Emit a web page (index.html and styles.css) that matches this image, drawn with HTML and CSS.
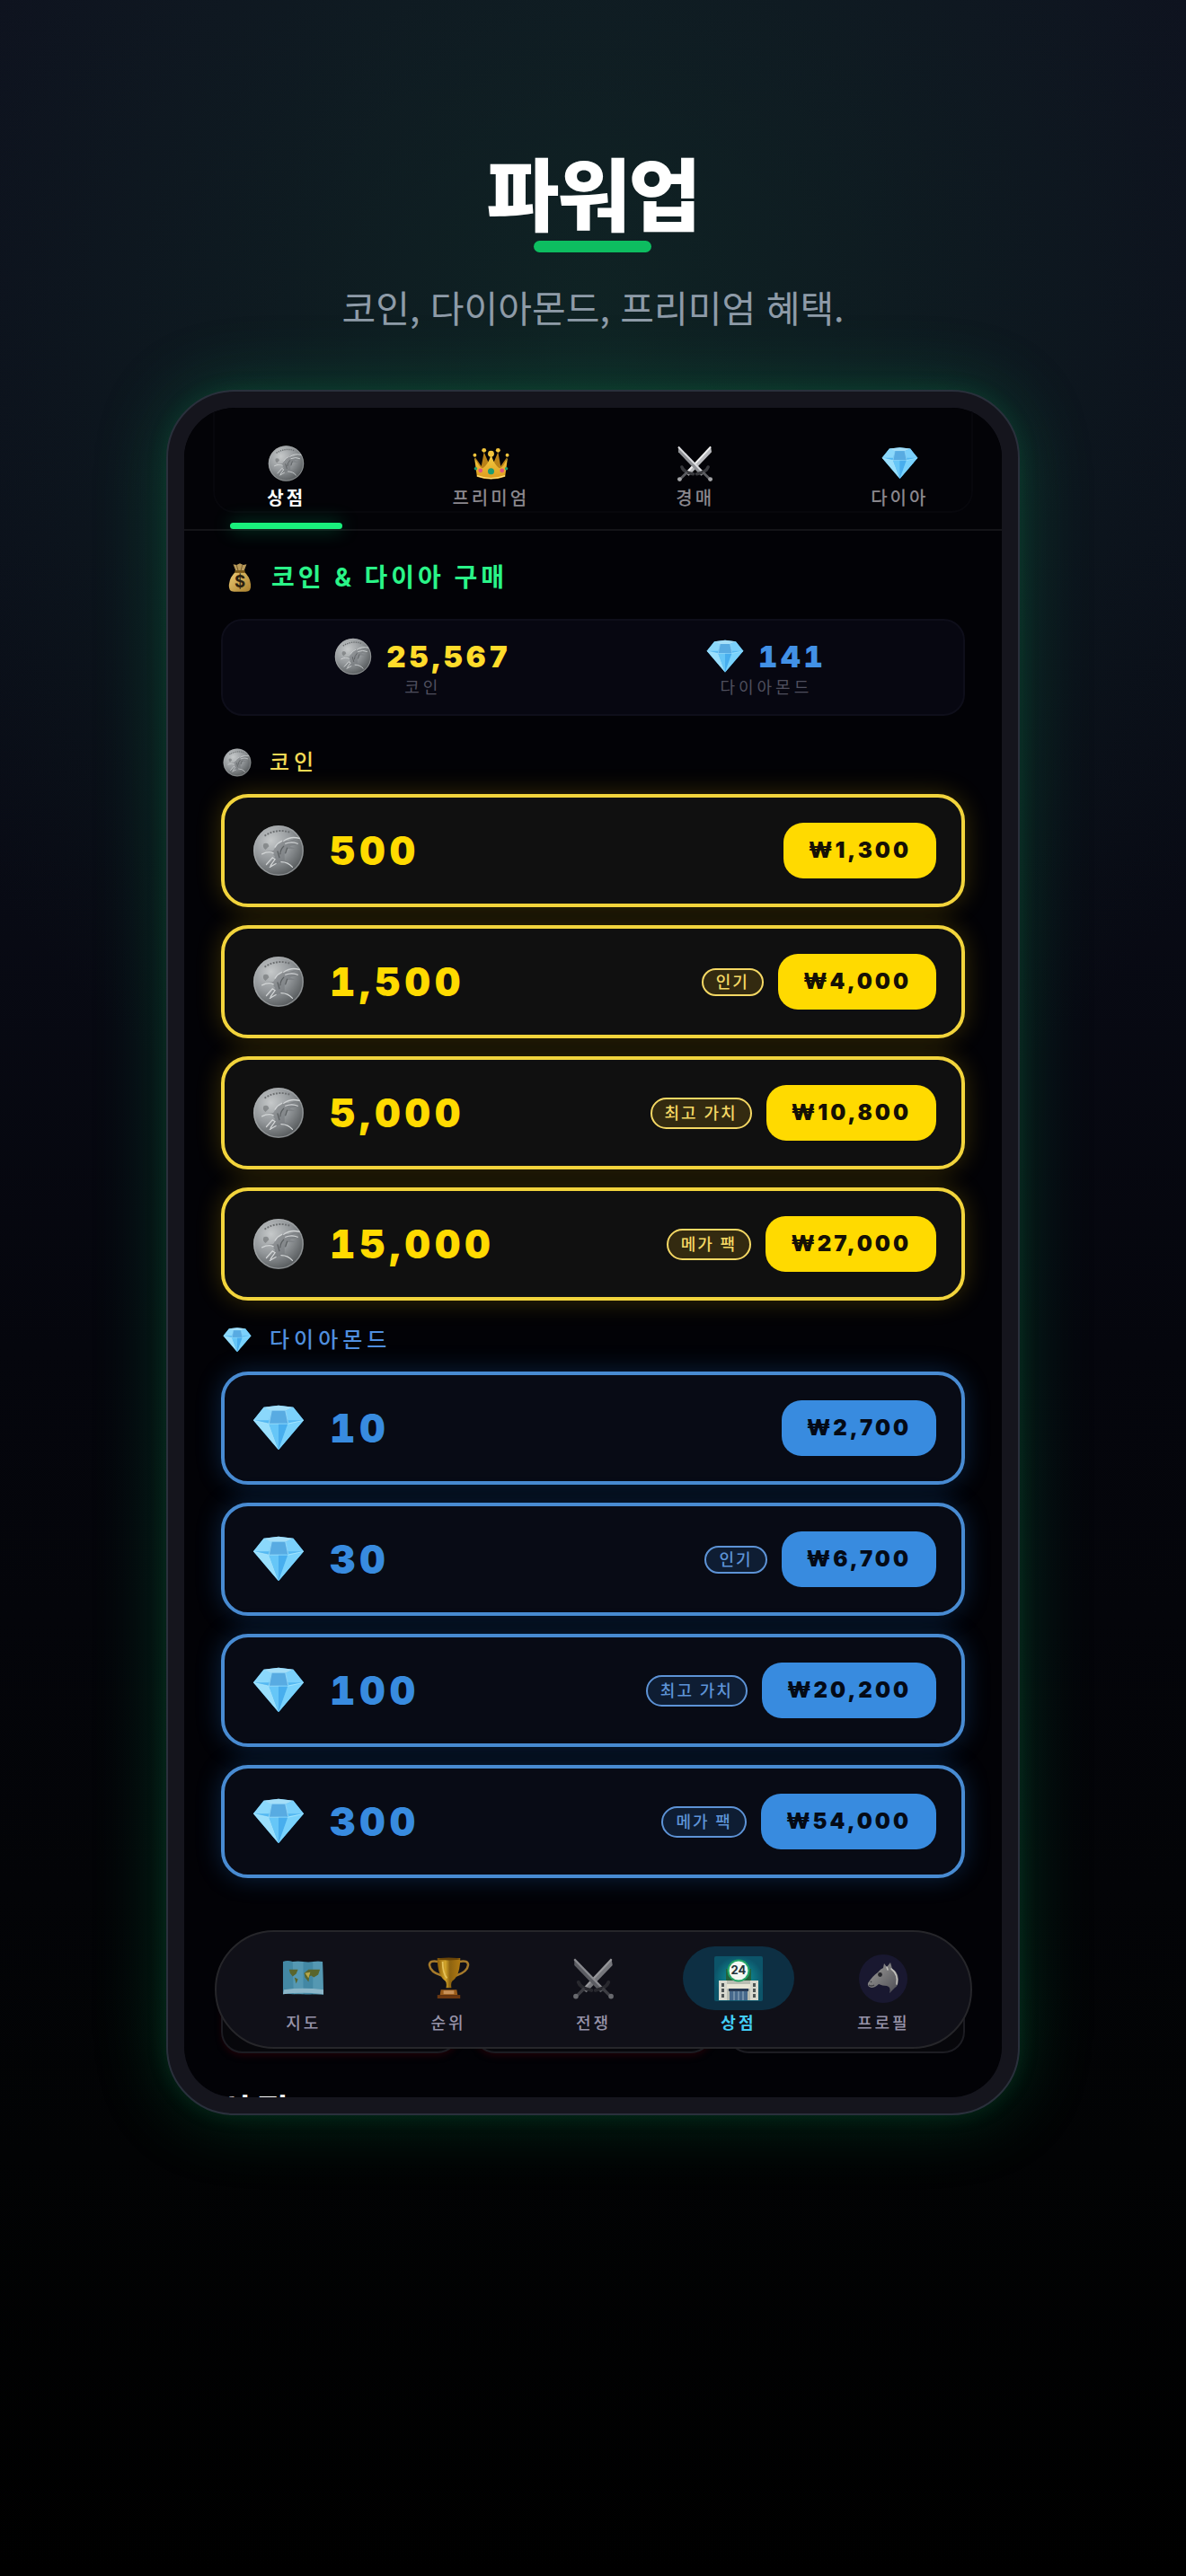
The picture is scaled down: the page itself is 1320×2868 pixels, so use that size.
FILE: index.html
```html
<!DOCTYPE html>
<html lang="ko">
<head>
<meta charset="utf-8">
<meta name="viewport" content="width=device-width, initial-scale=1">
<title>파워업</title>
<link rel="stylesheet" href="styles.css">
</head>
<body>
<svg class="sprite" aria-hidden="true">
  <defs>
    <radialGradient id="g-coin" cx=".35" cy=".3" r=".8"><stop offset="0" stop-color="#c6c9ca"/><stop offset=".5" stop-color="#93979a"/><stop offset="1" stop-color="#4b4f51"/></radialGradient>
    <linearGradient id="g-gold" x1="0" y1="0" x2="0" y2="1"><stop offset="0" stop-color="#f7cf45"/><stop offset="1" stop-color="#dd9a1c"/></linearGradient>
    <linearGradient id="g-cup" x1="0" y1="0" x2="1" y2="0"><stop offset="0" stop-color="#8a5b05"/><stop offset=".35" stop-color="#d3a52b"/><stop offset=".55" stop-color="#8d6310"/><stop offset="1" stop-color="#b07a12"/></linearGradient>
    <linearGradient id="g-bag" x1="0" y1="0" x2="1" y2="1"><stop offset="0" stop-color="#efcd77"/><stop offset="1" stop-color="#a87f2c"/></linearGradient>
    <linearGradient id="g-horse" x1="0" y1="0" x2="1" y2="1"><stop offset="0" stop-color="#a09f9c"/><stop offset="1" stop-color="#4b4b52"/></linearGradient>
    <radialGradient id="g-shop"><stop offset="0" stop-color="#12a7a9"/><stop offset="1" stop-color="#0c5469"/></radialGradient>
  </defs>
  <symbol id="i-coin" viewBox="0 0 60 60">
    <circle cx="30" cy="30" r="29" fill="url(#g-coin)"/>
    <circle cx="30" cy="30" r="28" fill="none" stroke="#aeb1b2" stroke-width="1.400" opacity=".6"/>
    <path d="M14 13q14-9 29-4" fill="none" stroke="#6d7072" stroke-width="2" stroke-dasharray="2 1.500"/>
    <path d="M13 22q5-2 6 3l-4 4q-4-3-2-7z" fill="#6b6e70" opacity=".6"/>
    <path d="M27 25q4-6 9-7l5 1 11-3-8 5 9 1-10 3 6 3-9 0-3 6 0 7 5 4-6-1-6 0-7 4-8 1 6-5 5-7-3-4-7-2 8-1z" fill="#73777a" opacity=".55"/>
    <path d="M36 19q8-6 18-3M38 22q7-3 14 0M11 34q8-4 13-1M16 46l7-8 3 2-5 7M20 49l7-4M33 43q8 0 13 6M26 26q3-5 8-7" fill="none" stroke="#d2d5d6" stroke-width="1.300" stroke-linecap="round"/>
    <path d="M36 25q-4 4-4 9M40 27l-2 6M29 31l2 7" fill="none" stroke="#5a5e60" stroke-width="1.300" stroke-linecap="round"/>
  </symbol>
  <symbol id="i-gem" viewBox="0 0 60 52">
    <path d="M13 2l17-2 17 2 12 15-29 34L1 17z" fill="#55b9f2"/>
    <path d="M13 2L1 17h18l3-12z" fill="#8bd8fb"/><path d="M13 2l17-2 17 2-9 4H22z" fill="#a4def8"/>
    <path d="M47 2l12 15H41L38 6z" fill="#7bd0fb"/><path d="M22 6h16l3 14-22 1z" fill="#58abe2"/>
    <path d="M1 17l18 4 11 30z" fill="#9adffc"/><path d="M19 21l11 30V21z" fill="#66c6f7"/>
    <path d="M30 21l11-1-11 31z" fill="#48aeee"/><path d="M59 17l-18 3-11 31z" fill="#79d2fc"/>
    <path d="M1 17l18 4h22l18-4M22 6l-3 15M38 6l3 14" fill="none" stroke="#bdefff" stroke-width="1" opacity=".6"/>
  </symbol>
  <symbol id="i-crown" viewBox="0 0 42 36">
    <path d="M3 11l7 10 3-16 5 12h6l5-12 3 16 7-10-3 21q-15 6-30 0z" fill="#b98118"/>
    <path d="M2 11q7 14 10 12 6-4 9-15 4 12 9 15 4 2 10-12l-3 22q-16 6-32 0z" fill="url(#g-gold)"/>
    <g fill="#f3c53d"><circle cx="2.500" cy="8.500" r="2"/><circle cx="13" cy="3" r="2.500"/><circle cx="21" cy="7" r="3.500"/><circle cx="29" cy="3" r="2.500"/><circle cx="39.500" cy="8.500" r="2"/></g>
    <circle cx="21" cy="27" r="3.600" fill="#1e9c72"/><circle cx="9" cy="26" r="2.400" fill="#e1557d"/><circle cx="33.500" cy="26" r="2.400" fill="#e1557d"/><circle cx="3.500" cy="24" r="1.800" fill="#1e9c72"/><circle cx="38.500" cy="24" r="1.800" fill="#1e9c72"/>
    <path d="M5 32q16 6 32 0" fill="none" stroke="#ffe27a" stroke-width="1.300"/>
  </symbol>
  <symbol id="i-swords" viewBox="0 0 42 42">
    <path d="M10 32L39 2l1 6-26 27z" fill="#b9babd"/><path d="M11 32L39 2" stroke="#f2f2f2" stroke-width="2"/>
    <path d="M32 32L2 2l0 6 26 27z" fill="#8f9195"/><path d="M31 32L2 2" stroke="#dcdde0" stroke-width="2"/>
    <path d="M6 25q2 6 13 8M36 25q-2 6-13 8" fill="none" stroke="#38393d" stroke-width="3.500" stroke-linecap="round"/>
    <path d="M12 31l-8 8M30 31l8 8" stroke="#5b5c60" stroke-width="3"/>
    <circle cx="3.500" cy="39" r="2.500" fill="#a3a4a7"/><circle cx="38.500" cy="39" r="2.500" fill="#a3a4a7"/>
  </symbol>
  <symbol id="i-map" viewBox="0 0 48 42">
    <path d="M1 2q5-2 11 0 6-1 12 0 6 1 11 0 6-1 11 0l1 37q-6-1-12 0-6 1-11 0-6-1-12 0-6-1-11 0z" fill="#4388a4"/>
    <path d="M12 2l1 37 11 0V2zM35 2v37l12 1L46 2z" fill="#5c9fb8" opacity=".7"/>
    <path d="M2 34q22-3 45 0v5q-23-3-46 0z" fill="#8cb6c8"/>
    <path d="M8 11h10l-2 5-4 3-3-4zM14 20l4 2-2 5zM25 15l5-4 13 0-2 6-5 3-3-2-2 1-1 6-4-5z" fill="#59652c"/>
    <path d="M26 15l6-1-2 7z" fill="#b7a74a"/>
  </symbol>
  <symbol id="i-trophy" viewBox="0 0 48 48">
    <path d="M12 5Q2 3 2 9q1 8 14 12M36 5q10-2 10 4-1 8-14 12" fill="none" stroke="#a67a2b" stroke-width="2.600"/>
    <path d="M11 1h26q0 20-9 26-2 2-1 8h-6q1-6-1-8-9-6-9-26z" fill="url(#g-cup)"/><ellipse cx="24" cy="2" rx="13" ry="1.500" fill="#6a4507"/>
    <path d="M15 37h18l1 6H14z" fill="#9a5b1a"/><path d="M18 38h12v4H18z" fill="#c99158"/><path d="M11 43h26v4H11z" fill="#6b3710"/>
    <path d="M17 5q0 13 5 19" fill="none" stroke="#e5c25a" stroke-width="1.800"/>
  </symbol>
  <symbol id="i-horse" viewBox="0 0 54 54">
    <circle cx="27" cy="27" r="27" fill="#191830"/>
    <path d="M27 15l1-5 3 4 4-5 2 7q6 3 7 11 0 8-4 10l-6 6q2-7-3-8-5 0-9-2-4 4-8 4-5-1-4-5 5-8 11-12 3-4 6-5z" fill="url(#g-horse)"/>
    <path d="M36 16q8 6 6 17M31 14l1 3" fill="none" stroke="#c0bfbb" stroke-width="1.600" stroke-linecap="round"/>
    <circle cx="23.500" cy="22.500" r="2.400" fill="#25252b"/><path d="M11 34q3 2 6 0M13 30l1 1" fill="none" stroke="#3c3c42" stroke-width="1.400"/>
  </symbol>
</svg>

<main class="page">
  <header class="hero">
    <h1 class="hero-title">파워업</h1>
    <p class="hero-sub">코인, 다이아몬드, 프리미엄 혜택.</p>
  </header>

  <section class="phone">
    <div class="screen">
      <nav class="tabs">
        <a class="tab is-active" href="#shop"><svg class="tab-icon"><use href="#i-coin"/></svg><span>상점</span></a>
        <a class="tab" href="#premium"><svg class="tab-icon"><use href="#i-crown"/></svg><span>프리미엄</span></a>
        <a class="tab" href="#auction"><svg class="tab-icon"><use href="#i-swords"/></svg><span>경매</span></a>
        <a class="tab" href="#dia"><svg class="tab-icon"><use href="#i-gem"/></svg><span>다이아</span></a>
      </nav>

      <div class="content">
        <h2 class="section-title">
          <svg class="bag-icon" viewBox="0 0 28 36">
            <path d="M6 2l4 1 4-2 4 2 4-1-3 8H9z" fill="#b89a5a"/><path d="M10 3l2 7M17 3l-2 7" stroke="#705625" stroke-width="1"/>
            <path d="M9 11h10q7 6 8 15 1 9-6 9H7q-7 0-6-9 1-9 8-15z" fill="url(#g-bag)"/>
            <path d="M8 11h12" stroke="#7a5818" stroke-width="3"/>
            <text x="14" y="30" text-anchor="middle" class="bag-sign">$</text>
          </svg>
          <span>코인 &amp; 다이아 구매</span>
        </h2>

        <div class="balance">
          <div class="wallet"><div class="wallet-row"><svg class="wallet-icon"><use href="#i-coin"/></svg><span class="wallet-value gold">25,567</span></div><span class="wallet-label">코인</span></div>
          <div class="wallet"><div class="wallet-row"><svg class="wallet-icon"><use href="#i-gem"/></svg><span class="wallet-value blue">141</span></div><span class="wallet-label">다이아몬드</span></div>
        </div>

        <h3 class="group-title gold-soft"><svg class="group-icon"><use href="#i-coin"/></svg><span>코인</span></h3>
        <ul class="packs packs-gold">
          <li class="pack"><svg class="pack-icon"><use href="#i-coin"/></svg><span class="amount">500</span><button class="price">₩1,300</button></li>
          <li class="pack"><svg class="pack-icon"><use href="#i-coin"/></svg><span class="amount">1,500</span><span class="badge">인기</span><button class="price">₩4,000</button></li>
          <li class="pack"><svg class="pack-icon"><use href="#i-coin"/></svg><span class="amount">5,000</span><span class="badge badge-tall">최고 가치</span><button class="price">₩10,800</button></li>
          <li class="pack"><svg class="pack-icon"><use href="#i-coin"/></svg><span class="amount">15,000</span><span class="badge badge-tall">메가 팩</span><button class="price">₩27,000</button></li>
        </ul>

        <h3 class="group-title blue-soft"><svg class="group-icon"><use href="#i-gem"/></svg><span>다이아몬드</span></h3>
        <ul class="packs packs-blue">
          <li class="pack"><svg class="pack-icon"><use href="#i-gem"/></svg><span class="amount">10</span><button class="price">₩2,700</button></li>
          <li class="pack"><svg class="pack-icon"><use href="#i-gem"/></svg><span class="amount">30</span><span class="badge">인기</span><button class="price">₩6,700</button></li>
          <li class="pack"><svg class="pack-icon"><use href="#i-gem"/></svg><span class="amount">100</span><span class="badge badge-tall">최고 가치</span><button class="price">₩20,200</button></li>
          <li class="pack"><svg class="pack-icon"><use href="#i-gem"/></svg><span class="amount">300</span><span class="badge badge-tall">메가 팩</span><button class="price">₩54,000</button></li>
        </ul>

        <div class="tiles"><div class="tile tile-red"></div><div class="tile tile-red"></div><div class="tile"></div></div>
        <div class="peek"><h2 class="peek-title">상점</h2></div>
      </div>

      <nav class="dock">
        <a class="dock-item" href="#map"><span class="dock-pill"><svg class="dock-icon"><use href="#i-map"/></svg></span><span>지도</span></a>
        <a class="dock-item" href="#rank"><span class="dock-pill"><svg class="dock-icon"><use href="#i-trophy"/></svg></span><span>순위</span></a>
        <a class="dock-item" href="#war"><span class="dock-pill"><svg class="dock-icon dim"><use href="#i-swords"/></svg></span><span>전쟁</span></a>
        <a class="dock-item is-active" href="#shop">
          <span class="dock-pill">
            <svg class="dock-icon large" viewBox="0 0 54 50">
              <rect width="54" height="50" rx="2" fill="url(#g-shop)"/>
              <path d="M13 14h28v17H13z" fill="#23623c"/><path d="M5 27h44v22H5z" fill="#b9bdb2"/>
              <path d="M5 27h9v22H5zM40 27h9v22h-9z" fill="#d8d9cf"/><path d="M8 30h3v4H8zM8 36h3v4H8zM8 42h3v4H8zM43 30h3v4h-3zM43 36h3v4h-3zM43 42h3v4h-3z" fill="#4e5555"/>
              <path d="M14 31h26v5H14z" fill="#e7e5d5"/><path d="M16 36h22v3H16z" fill="#283b55"/><path d="M17 39h20v10H17z" fill="#47698c"/><path d="M22 39v10M27 39v10M32 39v10" stroke="#9db4c4" stroke-width="1"/>
              <circle cx="27" cy="16" r="12.500" fill="#23a566"/><circle cx="27" cy="16" r="10.500" fill="#f2f7f2"/>
              <text x="27" y="20" text-anchor="middle" class="shop-sign">24</text>
            </svg>
          </span>
          <span>상점</span>
        </a>
        <a class="dock-item" href="#profile"><span class="dock-pill"><svg class="dock-icon large"><use href="#i-horse"/></svg></span><span>프로필</span></a>
      </nav>
    </div>
  </section>
</main>
</body>
</html>
```
FILE: styles.css
```css
* { box-sizing: border-box; }

body {
  margin: 0;
  min-height: 100vh;
  background:
    radial-gradient(ellipse 860px 1000px at 50% 360px, rgba(20, 70, 50, .36), transparent 100%),
    linear-gradient(#0e101e 0, #0b0e1a 600px, #05060d 1500px, #020304 2400px, #000 100%);
  color: #fff;
  font-family: Inter, "Noto Sans CJK KR", sans-serif;
}

h1, h2, h3, p, ul { margin: 0; padding: 0; }
ul { list-style: none; }
a { color: inherit; text-decoration: none; }
svg { display: block; flex: none; }
.sprite { position: absolute; width: 0; height: 0; }
.bag-sign,
.shop-sign { font-family: Inter, sans-serif; font-weight: 700; letter-spacing: 0; }
.bag-sign { font-size: 20px; fill: #2b2110; }
.shop-sign { font-size: 13px; fill: #23343a; }

.page {
  display: flex;
  flex-direction: column;
  align-items: center;
  padding: 156px 0 200px;
}

.hero {
  display: flex;
  flex-direction: column;
  align-items: center;
  font-family: "Noto Sans CJK KR", sans-serif;
  text-align: center;
}
.hero-title {
  font-size: 88px;
  line-height: 112px;
  font-weight: 900;
  letter-spacing: -2px;
}
.hero-title::after {
  content: "";
  display: block;
  width: 131px;
  height: 13px;
  margin: 0 auto;
  border-radius: 7px;
  background: #0dbd60;
}
.hero-sub {
  margin-top: 30px;
  font-size: 41px;
  line-height: 60px;
  font-weight: 400;
  color: #8e9ba8;
}

.phone {
  width: 72%;
  max-width: 950px;
  margin-top: 63px;
  padding: 18px;
  border: 2px solid #2a303c;
  border-radius: 76px;
  background: #15151d;
  box-shadow: 0 0 20px rgba(10, 100, 60, .25), 0 0 80px rgba(10, 180, 100, .26);
}
.screen {
  position: relative;
  overflow: hidden;
  border-radius: 56px;
  background: #020206;
}

.tabs {
  position: relative;
  display: grid;
  grid-template-columns: repeat(4, 1fr);
  padding-top: 41px;
  border-bottom: 2px solid #141418;
  background: #030307;
}
/* outline of the card that has scrolled under the bar */
.tabs::before {
  content: "";
  position: absolute;
  inset: 0 32px 18px;
  border: 2px solid #07070c;
  border-top: 0;
  border-radius: 0 0 24px 24px;
}
.tab {
  position: relative;
  display: flex;
  flex-direction: column;
  align-items: center;
  gap: 3px;
  font-size: 20px;
  line-height: 30px;
  font-weight: 500;
  letter-spacing: 3px;
  color: #8a878d;
}
.tab-icon { width: 41px; height: 42px; }
.tab::after {
  content: "";
  width: 125px;
  height: 7px;
  margin-top: 9px;
  border-radius: 4px;
}
.tab.is-active { color: #fff; font-weight: 700; }
.tab.is-active::after {
  background: #19f07c;
  box-shadow: 0 0 20px rgba(0, 255, 150, .35);
}

.content { padding: 32px 41px 0; }
.section-title {
  display: flex;
  align-items: center;
  gap: 22px;
  padding-left: 8px;
  font-size: 28px;
  line-height: 40px;
  font-weight: 700;
  letter-spacing: 4px;
  color: #2af588;
}
.bag-icon { width: 26px; height: 34px; }

.balance {
  display: flex;
  justify-content: space-around;
  height: 108px;
  margin-top: 26px;
  padding: 19px 44px 0 16px;
  border: 2px solid #0e0e1a;
  border-radius: 24px;
  background: #070711;
}
.wallet { display: flex; flex-direction: column; align-items: center; }
.wallet-row { display: flex; align-items: center; gap: 16px; }
.wallet-icon { width: 42px; height: 42px; }
.wallet-value {
  font-size: 33px;
  line-height: 42px;
  font-weight: 900;
  font-variant-numeric: tabular-nums;
  letter-spacing: 4px;
}
.wallet-label {
  font-size: 18px;
  line-height: 28px;
  letter-spacing: 4px;
  color: #4f4f5e;
}
.gold { color: #ffdc2b; }
.blue { color: #4291e6; }

.group-title {
  display: flex;
  align-items: center;
  gap: 20px;
  padding-left: 2px;
  font-size: 24px;
  line-height: 32px;
  font-weight: 500;
  letter-spacing: 5px;
}
.group-icon { width: 32px; height: 32px; }
.gold-soft { margin-top: 36px; color: #f5da55; }
.blue-soft { margin-top: 28px; color: #4f8ede; }

.packs { display: flex; flex-direction: column; gap: 20px; margin-top: 19px; }
.packs-gold { --main: #ffda00; --edge: #f2d43c; --fill: #101010; --glow: rgba(255, 205, 0, .22); --badge: #332a10; --badge-text: #f5d864; --ink: #151005; }
.packs-blue { --main: #388bdf; --edge: #488bd2; --fill: #080b15; --glow: rgba(40, 130, 230, .26); --badge: #0e1d33; --badge-text: #5d93d6; --ink: #040a16; }
.pack {
  display: flex;
  align-items: center;
  gap: 16px;
  height: 126px;
  padding: 0 28px 0 31px;
  border: 4px solid var(--edge);
  border-radius: 30px;
  background: var(--fill);
  box-shadow: 0 0 28px var(--glow);
}
.pack-icon { width: 58px; height: 58px; }
.amount {
  margin: 0 auto 0 12px;
  font-size: 44px;
  line-height: 56px;
  font-weight: 900;
  font-variant-numeric: tabular-nums;
  letter-spacing: 5px;
  color: var(--main);
}
.price {
  height: 62px;
  padding: 0 28px;
  border: 0;
  border-radius: 22px;
  background: var(--main);
  color: var(--ink);
  font: 900 24px/30px Inter, "Noto Sans CJK KR", sans-serif;
  letter-spacing: 3px;
}
.badge {
  padding: 0 14px;
  border: 2px solid var(--badge-text);
  border-radius: 18px;
  background: var(--badge);
  color: var(--badge-text);
  font-size: 18px;
  line-height: 27px;
  font-weight: 500;
  letter-spacing: 2px;
}
.badge-tall { line-height: 31px; }

.tiles {
  display: grid;
  grid-template-columns: repeat(3, 1fr);
  gap: 16px;
  margin-top: 95px;
}
.tile {
  height: 100px;
  border: 2px solid #1c1c22;
  border-radius: 24px;
  background: #07070b;
}
.tile-red { box-shadow: 0 4px 8px -2px rgba(90, 0, 10, .4); }
/* the next section, of which only the first few pixels are scrolled into view */
.peek { height: 8px; margin-top: 41px; overflow: hidden; }
.peek-title { font-size: 38px; line-height: 46px; letter-spacing: 5px; font-weight: 700; }

.dock {
  position: absolute;
  left: 34px;
  right: 33px;
  bottom: 54px;
  display: grid;
  grid-template-columns: repeat(5, 1fr);
  padding: 16px 16px 14px;
  border: 2px solid #26262a;
  border-radius: 66px;
  background: #101018;
}
.dock-item {
  display: flex;
  flex-direction: column;
  align-items: center;
  gap: 3px;
  font-size: 18px;
  line-height: 24px;
  font-weight: 500;
  letter-spacing: 3px;
  color: #9693a8;
}
.dock-pill {
  display: grid;
  place-items: center;
  width: 124px;
  height: 71px;
  border-radius: 36px;
}
.dock-icon { width: 47px; height: 47px; }
.dock-icon.large { width: 54px; height: 54px; }
.dim { opacity: .6; }
.dock-item.is-active { color: #43cdf5; font-weight: 700; }
.dock-item.is-active .dock-pill { background: #0d2f43; }
```
